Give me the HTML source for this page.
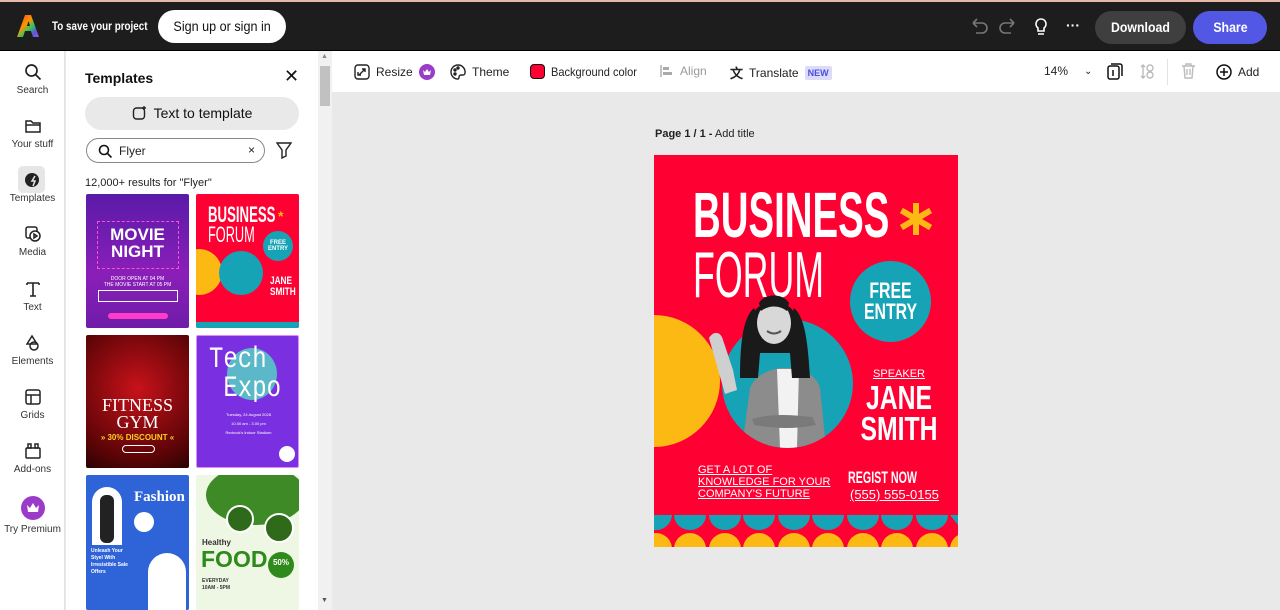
<!DOCTYPE html>
<html><head><meta charset="utf-8"><style>
*{box-sizing:border-box;margin:0;padding:0}
body{width:1280px;height:610px;overflow:hidden;background:#e9e9e9;font-family:"Liberation Sans",sans-serif;position:relative;color:#222}
.abs{position:absolute}
.top{left:0;top:0;width:1280px;height:51px;background:#1d1d1d;border-top:2px solid #e8b9a8;border-bottom:1px solid #000}
.rail{left:0;top:51px;width:65px;height:559px;background:#fff;border-right:1px solid #e3e3e3}
.ri{position:absolute;left:0;width:65px;text-align:center;font-size:10px;color:#333}
.ri svg{display:block;margin:0 auto 4px}
.panel{left:66px;top:51px;width:252px;height:559px;background:#fff}
.sb{left:318px;top:51px;width:14px;height:559px;background:#f1f1f1}
.tb{left:332px;top:51px;width:948px;height:41px;background:#fff}
.tt{position:absolute;top:13px;font-size:12px;color:#222;display:flex;align-items:center;gap:6px}
.th{position:absolute;overflow:hidden;border-radius:2px}
.sx{display:inline-block;white-space:nowrap}
</style></head><body>
<div class="abs top">
  <svg class="abs" style="left:17px;top:12px" width="22" height="24" viewBox="0 0 22 24"><defs><linearGradient id="g" x1="0" y1="0" x2="1" y2="1"><stop offset="0" stop-color="#ff3b30"/><stop offset=".4" stop-color="#ff9500"/><stop offset=".6" stop-color="#34c759"/><stop offset=".8" stop-color="#5856d6"/><stop offset="1" stop-color="#af52de"/></linearGradient></defs><path d="M8 1h6l8 22h-6l-2-6H8l-2 6H0z M10 12h3l-1.5-5z" fill="url(#g)" fill-rule="evenodd"/></svg>
  <div class="abs" style="left:52px;top:17px;color:#fff;font-size:12px;font-weight:bold;white-space:nowrap;transform:scaleX(.82);transform-origin:left top">To save your project</div>
  <div class="abs" style="left:158px;top:8px;width:128px;height:33px;background:#fff;border-radius:17px;text-align:center;line-height:33px;color:#111"><span class="sx" style="font-size:14px;transform:scaleX(.9)">Sign up or sign in</span></div>
  <svg class="abs" style="left:970px;top:16px" width="50" height="18" viewBox="0 0 50 18" fill="none" stroke="#777" stroke-width="1.6"><path d="M3 5h9a5 5 0 010 10H6M3 5l4-4M3 5l4 4"/><path d="M44 5h-9a5 5 0 000 10h6M44 5l-4-4M44 5l-4 4"/></svg>
  <svg class="abs" style="left:1033px;top:15px" width="16" height="20" viewBox="0 0 16 20" fill="none" stroke="#fff" stroke-width="1.6"><path d="M8 2a5 5 0 00-3 9v3h6v-3a5 5 0 00-3-9zM5 17h6"/></svg>
  <div class="abs" style="left:1066px;top:15px;color:#fff;font-size:14px;font-weight:bold">···</div>
  <div class="abs" style="left:1095px;top:9px;width:91px;height:33px;background:#3f3f3f;border-radius:17px;color:#fff;text-align:center;line-height:33px"><span class="sx" style="font-size:14px;font-weight:bold;transform:scaleX(.88)">Download</span></div>
  <div class="abs" style="left:1193px;top:9px;width:74px;height:33px;background:#5258e4;border-radius:17px;color:#fff;text-align:center;line-height:33px"><span class="sx" style="font-size:14px;font-weight:bold;transform:scaleX(.88)">Share</span></div>
</div>

<div class="abs rail">
  <div class="ri" style="top:12px"><svg width="18" height="18" viewBox="0 0 18 18" fill="none" stroke="#222" stroke-width="1.7"><circle cx="7.5" cy="7.5" r="5.5"/><path d="M11.5 11.5l5 5"/></svg>Search</div>
  <div class="ri" style="top:66px"><svg width="18" height="18" viewBox="0 0 18 18" fill="none" stroke="#222" stroke-width="1.5"><path d="M2 4h5l2 2h7v9H2z M2 8h14"/></svg>Your stuff</div>
  <div style="position:absolute;left:18px;top:115px;width:27px;height:27px;background:#e6e6e6;border-radius:5px"></div>
  <div class="ri" style="top:120px"><svg width="18" height="18" viewBox="0 0 18 18"><circle cx="8" cy="9" r="7" fill="#222"/><path d="M11 5l-3 5h3l-2 5" stroke="#e6e6e6" stroke-width="1.5" fill="none"/></svg>Templates</div>
  <div class="ri" style="top:174px"><svg width="18" height="18" viewBox="0 0 18 18" fill="none" stroke="#222" stroke-width="1.5"><rect x="2" y="2" width="11" height="11" rx="2"/><circle cx="11" cy="11" r="5" fill="#fff"/><path d="M10 9l3 2-3 2z"/></svg>Media</div>
  <div class="ri" style="top:229px"><svg width="18" height="18" viewBox="0 0 18 18" fill="none" stroke="#222" stroke-width="1.6"><path d="M3 3h12M9 3v13M6 16h6M3 3v2M15 3v2"/></svg>Text</div>
  <div class="ri" style="top:283px"><svg width="18" height="18" viewBox="0 0 18 18" fill="none" stroke="#222" stroke-width="1.5"><path d="M8 2l5 8H3z"/><circle cx="10" cy="12" r="4"/></svg>Elements</div>
  <div class="ri" style="top:337px"><svg width="18" height="18" viewBox="0 0 18 18" fill="none" stroke="#222" stroke-width="1.5"><rect x="2" y="2" width="14" height="14" rx="2"/><path d="M2 7h14M7 7v9"/></svg>Grids</div>
  <div class="ri" style="top:391px"><svg width="18" height="18" viewBox="0 0 18 18" fill="none" stroke="#222" stroke-width="1.5"><rect x="2" y="6" width="14" height="10" rx="1"/><rect x="4" y="2" width="3" height="4"/><rect x="11" y="2" width="3" height="4"/></svg>Add-ons</div>
  <div class="ri" style="top:445px"><svg width="24" height="24" viewBox="0 0 24 24"><circle cx="12" cy="12" r="12" fill="#9b3cc9"/><path d="M6 9l3 3 3-5 3 5 3-3-1 7H7z" fill="#fff"/></svg>Try Premium</div>
</div>

<div class="abs panel">
  <div class="abs" style="left:19px;top:19px;font-size:14px;font-weight:bold;color:#111">Templates</div>
  <div class="abs" style="left:218px;top:15px;font-size:18px;color:#111">✕</div>
  <div class="abs" style="left:19px;top:46px;width:214px;height:33px;background:#e9e9e9;border-radius:17px;font-size:14px;text-align:center;line-height:33px;color:#111">
    <svg style="vertical-align:-3px;margin-right:6px" width="16" height="16" viewBox="0 0 16 16" fill="none" stroke="#222" stroke-width="1.4"><rect x="1.5" y="3" width="11" height="11" rx="3"/><path d="M12 1v4M10 3h4"/></svg>Text to template</div>
  <div class="abs" style="left:20px;top:87px;width:179px;height:25px;border:1px solid #888;border-radius:13px">
    <svg class="abs" style="left:11px;top:5px" width="14" height="14" viewBox="0 0 14 14" fill="none" stroke="#111" stroke-width="1.6"><circle cx="6" cy="6" r="4.5"/><path d="M9.5 9.5l4 4"/></svg>
    <span class="abs" style="left:32px;top:5px;font-size:12px">Flyer</span>
    <span class="abs" style="left:161px;top:4px;font-size:12px">×</span>
  </div>
  <svg class="abs" style="left:210px;top:91px" width="16" height="17" viewBox="0 0 16 17" fill="none" stroke="#222" stroke-width="1.4"><path d="M1 1h14l-5 7v6l-4 2V8z"/></svg>
  <div class="abs" style="left:19px;top:126px;font-size:11px;color:#222">12,000+ results for "Flyer"</div>
</div>
<!-- thumbnails -->
<div class="th" style="left:86px;top:194px;width:103px;height:134px;background:linear-gradient(#5a1aa8,#8a1fb8 60%,#6f1ca8)">
  <div class="abs" style="left:11px;top:27px;width:82px;height:48px;border:1px dashed #ff4fd8"></div>
  <div class="abs" style="left:0;top:32px;width:103px;text-align:center;color:#fff;font-weight:bold;font-size:17px;line-height:17px">MOVIE<br>NIGHT</div>
  <div class="abs" style="left:0;top:82px;width:103px;text-align:center;color:#fff;font-size:5px">DOOR OPEN AT 04 PM<br>THE MOVIE START AT 05 PM</div>
  <div class="abs" style="left:12px;top:96px;width:80px;height:12px;border:1px solid #fff"></div>
  <div class="abs" style="left:22px;top:119px;width:60px;height:6px;background:#ff3cc8;border-radius:3px"></div>
</div>
<div class="th" style="left:196px;top:194px;width:103px;height:134px;background:#ff0033">
  <div class="abs" style="left:12px;top:10px;color:#fff;font-weight:bold;font-size:22px;line-height:22px;transform:scaleX(.6);transform-origin:left top">BUSINESS</div>
  <div class="abs" style="left:12px;top:30px;color:#fff;font-size:22px;line-height:22px;transform:scaleX(.58);transform-origin:left top">FORUM</div>
  <div class="abs" style="left:82px;top:14px;color:#fdb913;font-size:14px;font-weight:bold">*</div>
  <div class="abs" style="left:-20px;top:55px;width:46px;height:46px;border-radius:50%;background:#fdb913"></div>
  <div class="abs" style="left:23px;top:57px;width:44px;height:44px;border-radius:50%;background:#16a3b5"></div>
  <div class="abs" style="left:67px;top:37px;width:30px;height:30px;border-radius:50%;background:#16a3b5;color:#fff;font-size:6px;font-weight:bold;text-align:center;padding-top:9px">FREE<br>ENTRY</div>
  <div class="abs" style="left:74px;top:82px;color:#fff;font-weight:bold;font-size:11px;line-height:11px;transform:scaleX(.75);transform-origin:left top">JANE<br>SMITH</div>
  <div class="abs" style="left:0;top:128px;width:103px;height:6px;background:#16a3b5"></div>
</div>
<div class="th" style="left:86px;top:335px;width:103px;height:133px;background:radial-gradient(circle at 50% 40%,#c8121a,#5a0406 75%,#2a0203)">
  <div class="abs" style="left:0;top:62px;width:103px;text-align:center;color:#fff;font-family:'Liberation Serif',serif;font-size:18px;line-height:17px">FITNESS<br>GYM</div>
  <div class="abs" style="left:0;top:98px;width:103px;text-align:center;color:#ffd21c;font-weight:bold;font-size:8px">» 30% DISCOUNT «</div>
  <div class="abs" style="left:36px;top:110px;width:33px;height:8px;border:1px solid #fff;border-radius:4px"></div>
</div>
<div class="th" style="left:196px;top:335px;width:103px;height:133px;background:#7a2fe0;border:1px solid #e08cf0">
  <div class="abs" style="left:30px;top:12px;width:50px;height:52px;border-radius:50%;background:#5ab8c8"></div>
  <div class="abs" style="left:12px;top:10px;color:#fff;font-size:30px;line-height:29px;font-family:'Liberation Mono',monospace;transform:scaleX(.8);transform-origin:left top">Tech<br>&nbsp;Expo</div>
  <div class="abs" style="left:0;top:74px;width:103px;text-align:center;color:#fff;font-size:4px;line-height:9px">Tuesday, 24 August 2028<br>10.00 am - 3.00 pm<br>Redrock's Indoor Stadium</div>
  <div class="abs" style="left:82px;top:110px;width:16px;height:16px;border-radius:50%;background:#fff"></div>
</div>
<div class="th" style="left:86px;top:475px;width:103px;height:135px;background:#2f63d8">
  <div class="abs" style="left:6px;top:12px;width:30px;height:58px;border-radius:15px 15px 0 0;background:#fff"></div>
  <div class="abs" style="left:14px;top:20px;width:14px;height:48px;background:#222;border-radius:6px"></div>
  <div class="abs" style="left:48px;top:14px;color:#fff;font-weight:bold;font-family:'Liberation Serif',serif;font-size:15px">Fashion</div>
  <div class="abs" style="left:48px;top:37px;width:20px;height:20px;border-radius:50%;background:#fff"></div>
  <div class="abs" style="left:62px;top:78px;width:38px;height:57px;border-radius:19px 19px 0 0;background:#fff"></div>
  <div class="abs" style="left:5px;top:73px;color:#fff;font-size:5px;line-height:7px;font-weight:bold">Unleash Your<br>Styel With<br>Irresistible Sale<br>Offers</div>
</div>
<div class="th" style="left:196px;top:475px;width:103px;height:135px;background:#eef7e4">
  <div class="abs" style="left:10px;top:-10px;width:100px;height:60px;border-radius:50%;background:#3e8a26"></div>
  <div class="abs" style="left:30px;top:30px;width:28px;height:28px;border-radius:50%;background:#2e6a1a;border:2px solid #fff"></div>
  <div class="abs" style="left:68px;top:38px;width:30px;height:30px;border-radius:50%;background:#2e6a1a;border:2px solid #fff"></div>
  <div class="abs" style="left:6px;top:63px;color:#333;font-weight:bold;font-size:8px">Healthy</div>
  <div class="abs" style="left:5px;top:71px;color:#2e8a1a;font-weight:bold;font-size:23px">FOOD</div>
  <div class="abs" style="left:72px;top:77px;width:26px;height:26px;border-radius:50%;background:#2e8a1a;color:#fff;font-size:8px;font-weight:bold;text-align:center;padding-top:6px">50%</div>
  <div class="abs" style="left:6px;top:103px;color:#333;font-size:5px;font-weight:bold;line-height:7px">EVERYDAY<br>10AM - 5PM</div>
</div>

<div class="abs sb"><div class="abs" style="left:2px;top:15px;width:10px;height:40px;background:#c1c1c1"></div><div class="abs" style="left:3px;top:2px;font-size:7px;color:#888">▲</div><div class="abs" style="left:3px;top:546px;font-size:7px;color:#555">▼</div></div>

<div class="abs tb">
  <div class="tt" style="left:22px"><svg width="16" height="16" viewBox="0 0 16 16" fill="none" stroke="#222" stroke-width="1.4"><rect x="1" y="1" width="14" height="14" rx="3"/><path d="M5 11l6-6M8 5h3v3M4 8v3h3"/></svg>Resize <svg width="16" height="16" viewBox="0 0 16 16"><circle cx="8" cy="8" r="8" fill="#9b3cc9"/><path d="M4 6l2 2 2-3 2 3 2-2-1 5H5z" fill="#fff"/></svg></div>
  <div class="tt" style="left:118px"><svg width="16" height="16" viewBox="0 0 16 16" fill="none" stroke="#222" stroke-width="1.4"><path d="M8 1a7 7 0 100 14c1 0 1-1 1-2s1-2 2-2h2a2 2 0 002-2A7 7 0 008 1z"/><circle cx="5" cy="6" r="1" fill="#222"/><circle cx="8" cy="4" r="1" fill="#222"/><circle cx="5" cy="10" r="1" fill="#222"/></svg>Theme</div>
  <div class="tt" style="left:198px"><span style="display:inline-block;width:15px;height:15px;border-radius:4px;background:#ff0033;border:1.5px solid #111"></span><span class="sx" style="transform:scaleX(.92);transform-origin:left">Background color</span></div>
  <div class="tt" style="left:328px;color:#999"><svg width="14" height="14" viewBox="0 0 14 14"><path d="M1 1v12" stroke="#aaa" stroke-width="1.4"/><rect x="3" y="3" width="6" height="3" fill="#aaa"/><rect x="3" y="8" width="9" height="3" fill="#aaa"/></svg>Align</div>
  <div class="tt" style="left:398px;top:12px"><b style="font-size:13px">文</b>Translate <span style="background:#dcdcfa;color:#4b4fd8;font-size:9px;font-weight:bold;padding:2px 3px;border-radius:2px">NEW</span></div>
  <div class="tt" style="left:712px">14% <span style="margin-left:10px;font-size:10px">⌄</span></div>
  <svg class="abs" style="left:775px;top:12px" width="16" height="17" viewBox="0 0 16 17" fill="none" stroke="#111" stroke-width="1.5"><rect x="1" y="3" width="11" height="13" rx="2"/><path d="M4 1h9a2 2 0 012 2v10"/><path d="M6 7v6" /></svg>
  <svg class="abs" style="left:808px;top:12px" width="16" height="17" viewBox="0 0 16 17" fill="none" stroke="#bbb" stroke-width="1.4"><circle cx="10" cy="5" r="3"/><circle cx="10" cy="12" r="3"/><path d="M3 2v13M1 4l2-2 2 2M1 13l2 2 2-2"/></svg>
  <div class="abs" style="left:835px;top:8px;width:1px;height:26px;background:#e3e3e3"></div>
  <svg class="abs" style="left:849px;top:12px" width="15" height="16" viewBox="0 0 15 16" fill="none" stroke="#bbb" stroke-width="1.4"><path d="M1 3h13M5 3V1h5v2M3 3l1 12h7l1-12M6 6v6M9 6v6"/></svg>
  <div class="tt" style="left:884px;font-size:12px"><svg width="16" height="16" viewBox="0 0 16 16" fill="none" stroke="#111" stroke-width="1.5"><circle cx="8" cy="8" r="7"/><path d="M8 4v8M4 8h8"/></svg>Add</div>
</div>

<div class="abs" style="left:655px;top:128px;font-size:11px;color:#222"><b>Page 1 / 1 -</b> Add title</div>

<!-- poster -->
<div class="abs" style="left:654px;top:155px;width:304px;height:392px;background:#ff0033;overflow:hidden">
  <div class="abs" style="left:39px;top:28px;color:#fff;font-weight:bold;font-size:64px;line-height:64px;white-space:nowrap;transform:scaleX(.6);transform-origin:left top">BUSINESS</div>
  <div class="abs" style="left:39px;top:87px;color:#fff;font-size:65px;line-height:65px;white-space:nowrap;transform:scaleX(.55);transform-origin:left top">FORUM</div>
  <svg class="abs" style="left:246px;top:48px" width="32" height="32" viewBox="0 0 32 32"><g stroke="#fdb913" stroke-width="6" stroke-linecap="square"><path d="M16 3v26M4 9l24 14M28 9L4 23"/></g></svg>
  <div class="abs" style="left:-66px;top:160px;width:132px;height:132px;border-radius:50%;background:#fdb913"></div>
  <div class="abs" style="left:68px;top:164px;width:131px;height:129px;border-radius:50%;background:#16a3b5;overflow:hidden">
    <svg class="abs" style="left:0;top:0" width="131" height="129" viewBox="0 0 131 129">
      <path d="M20 129l8-60c6-14 20-18 30-20l10 0c12 2 26 6 30 20l6 60z" fill="#8c8c8c"/>
      <path d="M55 50h22l-2 79H58z" fill="#f2f2f2"/>
      <path d="M30 100c20-6 40-4 60-2l4 8c-20 4-40 4-62 0z" fill="#7a7a7a"/>
    </svg>
  </div>
  <svg class="abs" style="left:45px;top:128px" width="130" height="165" viewBox="0 0 130 165">
    <path d="M55 25c-12 10-14 40-14 70l18 0 4-50z" fill="#1a1a1a"/>
    <path d="M95 25c12 10 14 40 16 70l-18 0-4-50z" fill="#1a1a1a"/>
    <path d="M52 40c0-28 46-28 46 0v30H52z" fill="#1a1a1a"/>
    <ellipse cx="75" cy="40" rx="17" ry="21" fill="#d8d8d8"/>
    <path d="M60 20c6-10 24-10 30 0l-2 8c-8-6-18-6-26 0z" fill="#1a1a1a"/>
    <path d="M68 48q7 5 14 0" stroke="#555" stroke-width="2" fill="none"/>
    <path d="M10 55c5-8 12-6 14 2l10 30 4 20-12 4z" fill="#cfcfcf"/>
  </svg>
  <div class="abs" style="left:196px;top:106px;width:81px;height:81px;border-radius:50%;background:#16a3b5;color:#fff;text-align:center"><div style="font-weight:bold;font-size:22px;line-height:21px;padding-top:19px;transform:scaleX(.72)">FREE<br>ENTRY</div></div>
  <div class="abs" style="left:190px;top:213px;width:110px;text-align:center;color:#fff;font-size:11px;text-decoration:underline">SPEAKER</div>
  <div class="abs" style="left:190px;top:227px;width:110px;text-align:center;color:#fff;font-weight:bold;font-size:33px;line-height:31px;transform:scaleX(.75)">JANE<br>SMITH</div>
  <div class="abs" style="left:44px;top:309px;color:#fff;font-size:11px;line-height:12px;text-decoration:underline">GET A LOT OF<br>KNOWLEDGE FOR YOUR<br>COMPANY'S FUTURE</div>
  <div class="abs" style="left:194px;top:313px;color:#fff;font-weight:bold;font-size:17px;white-space:nowrap;transform:scaleX(.63);transform-origin:left top">REGIST NOW</div>
  <div class="abs" style="left:196px;top:332px;color:#fff;font-size:13px;text-decoration:underline">(555) 555-0155</div>
  <svg class="abs" style="left:0;top:360px" width="304" height="32" viewBox="0 0 304 32">
    <g fill="#16a3b5"><path d="M0 0h18a16 16 0 01-18 15z"/><path d="M20 0a16 15 0 0032 0z"/><path d="M55 0a16 15 0 0032 0z"/><path d="M89 0a16 15 0 0032 0z"/><path d="M124 0a16 15 0 0032 0z"/><path d="M158 0a16 15 0 0032 0z"/><path d="M193 0a16 15 0 0032 0z"/><path d="M227 0a16 15 0 0032 0z"/><path d="M262 0a16 15 0 0032 0z"/><path d="M296 0h8v10z"/></g>
    <g fill="#fdb913"><circle cx="2" cy="34" r="16"/><circle cx="36" cy="34" r="16"/><circle cx="71" cy="34" r="16"/><circle cx="105" cy="34" r="16"/><circle cx="140" cy="34" r="16"/><circle cx="174" cy="34" r="16"/><circle cx="209" cy="34" r="16"/><circle cx="243" cy="34" r="16"/><circle cx="278" cy="34" r="16"/><circle cx="312" cy="34" r="16"/></g>
  </svg>
</div>
</body></html>
